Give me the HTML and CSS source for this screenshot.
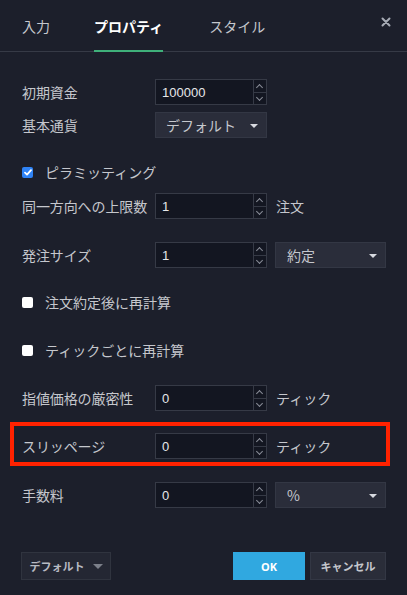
FILE: index.html
```html
<!DOCTYPE html>
<html lang="ja">
<head>
<meta charset="utf-8">
<link rel="stylesheet" href="styles.css">
</head>
<body>
<div class="dialog">
  <div class="tabs">
    <div class="tab">入力</div>
    <div class="tab active">プロパティ</div>
    <div class="tab">スタイル</div>
    <div class="close">
      <svg width="10" height="10" viewBox="0 0 10 10"><path d="M1.5 1.5 L8.5 8.5 M8.5 1.5 L1.5 8.5" stroke="#a7abb5" stroke-width="2" stroke-linecap="round"/></svg>
    </div>
  </div>
  <div class="form">
    <div class="row r1">
      <div class="label">初期資金</div>
      <div class="num"><span class="val">100000</span><span class="spin"><i class="up"></i><i class="dn"></i></span></div>
    </div>
    <div class="row r2">
      <div class="label">基本通貨</div>
      <div class="select wide"><span>デフォルト</span><b class="caret"></b></div>
    </div>
    <div class="row check r3">
      <span class="box on"><svg width="8" height="7" viewBox="0 0 8 7"><path d="M1 3.6 L3 5.6 L7 1.2" stroke="#fff" stroke-width="1.8" fill="none" stroke-linecap="round" stroke-linejoin="round"/></svg></span>
      <span class="ctext">ピラミッティング</span>
    </div>
    <div class="row r4">
      <div class="label">同一方向への上限数</div>
      <div class="num"><span class="val">1</span><span class="spin"><i class="up"></i><i class="dn"></i></span></div>
      <div class="unit">注文</div>
    </div>
    <div class="row r5">
      <div class="label">発注サイズ</div>
      <div class="num"><span class="val">1</span><span class="spin"><i class="up"></i><i class="dn"></i></span></div>
      <div class="select unitsel"><span>約定</span><b class="caret"></b></div>
    </div>
    <div class="row check r6">
      <span class="box"></span>
      <span class="ctext">注文約定後に再計算</span>
    </div>
    <div class="row check r7">
      <span class="box"></span>
      <span class="ctext">ティックごとに再計算</span>
    </div>
    <div class="row r8">
      <div class="label">指値価格の厳密性</div>
      <div class="num"><span class="val">0</span><span class="spin"><i class="up"></i><i class="dn"></i></span></div>
      <div class="unit">ティック</div>
    </div>
    <div class="row r9 highlight">
      <div class="label">スリッページ</div>
      <div class="num"><span class="val">0</span><span class="spin"><i class="up"></i><i class="dn"></i></span></div>
      <div class="unit">ティック</div>
    </div>
    <div class="row r10">
      <div class="label">手数料</div>
      <div class="num"><span class="val">0</span><span class="spin"><i class="up"></i><i class="dn"></i></span></div>
      <div class="select unitsel"><span>%</span><b class="caret"></b></div>
    </div>
  </div>
  <div class="footer">
    <div class="btn deflt">デフォルト <b class="caret grey"></b></div>
    <div class="spacer"></div>
    <div class="btn ok">OK</div>
    <div class="btn cancel">キャンセル</div>
  </div>
</div>
</body>
</html>
```

FILE: styles.css
```css
* { box-sizing: border-box; }
html, body { margin: 0; padding: 0; }
body {
  width: 407px;
  height: 595px;
  background: #1c1f2b;
  font-family: "Noto Sans CJK JP", "Noto Sans", sans-serif;
  color: #c5c7cd;
  font-size: 14px;
  overflow: hidden;
}
.dialog { width: 407px; height: 595px; display: flex; flex-direction: column; }
.tabs {
  height: 52px;
  border-bottom: 1px solid #363a46;
  display: flex;
  align-items: stretch;
  padding-left: 22px;
}
.tab {
  font-size: 14px;
  color: #c5c7cd;
  display: flex;
  align-items: center;
  padding-top: 1px;
  border-bottom: 2px solid transparent;
  margin-bottom: -1px;
}
.tab:first-child { margin-right: 44px; }
.tab.active {
  color: #ffffff;
  font-weight: bold;
  border-bottom-color: #3fb07a;
  margin-right: 46px;
}
.close {
  margin-left: auto;
  width: 40px;
  display: flex;
  align-items: flex-start;
  justify-content: center;
  padding-top: 17px;
  padding-right: 2px;
}
.form { display: flex; flex-direction: column; padding: 0 21px 0 22px; }
.row { display: flex; align-items: center; height: 26px; }
.r1 { margin-top: 27px; }
.r2 { margin-top: 7px; }
.r3 { margin-top: 21px; }
.r4 { margin-top: 8px; }
.r5 { margin-top: 23px; }
.r6 { margin-top: 21px; }
.r7 { margin-top: 22px; }
.r8 { margin-top: 22px; }
.r9 { margin-top: 22px; }
.r10 { margin-top: 23px; }
.label { width: 133px; font-size: 14px; color: #c5c7cd; white-space: nowrap; letter-spacing: -0.1px; }
.num {
  width: 112px;
  height: 26px;
  display: flex;
  background: #131621;
  border: 1px solid #363a46;
}
.val {
  flex: 1;
  padding-left: 6px;
  font-family: "Liberation Sans", "Noto Sans", sans-serif;
  font-size: 13px;
  color: #e6e7ea;
  display: flex;
  align-items: center;
  padding-top: 1px;
}
.spin {
  width: 13px;
  border-left: 1px solid #363a46;
  display: flex;
  flex-direction: column;
}
.spin i { flex: 1; position: relative; display: block; }
.spin i.up { border-bottom: 1px solid #363a46; }
.spin i::after {
  content: "";
  position: absolute;
  left: 3px;
  width: 4px;
  height: 4px;
  border-left: 1px solid #8a8e98;
  border-top: 1px solid #8a8e98;
}
.spin i.up::after { top: 5px; transform: rotate(45deg); }
.spin i.dn::after { top: 2px; transform: rotate(225deg); }
.unit { margin-left: 9px; font-size: 14px; color: #c5c7cd; }
.select {
  height: 26px;
  background: #2a2d3a;
  border: 1px solid #333744;
  display: flex;
  align-items: center;
  padding-left: 10px;
  padding-right: 8px;
  color: #c5c7cd;
  font-size: 14px;
}
.select span { flex: 1; }
.select.wide { width: 112px; }
.select.unitsel { width: 111px; margin-left: 8px; padding-left: 11px; }
.caret {
  width: 0; height: 0;
  border-left: 4px solid transparent;
  border-right: 4px solid transparent;
  border-top: 4px solid #d8dae0;
  margin-top: 2px;
}
.caret.grey { border-top-color: #7c808a; border-left-width: 5px; border-right-width: 5px; border-top-width: 5px; margin-left: 8px; margin-top: 1px; }
.box {
  width: 11px; height: 11px;
  border-radius: 2px;
  background: #ffffff;
  display: flex; align-items: center; justify-content: center;
  margin-right: 12px;
}
.box.on { background: #2f83f6; }
.ctext { font-size: 14px; color: #c5c7cd; }
.highlight { position: relative; }
.highlight::after {
  content: "";
  position: absolute;
  left: -12px; right: -4px; top: -11px; bottom: -7px;
  border: 4px solid #ff2200;
  pointer-events: none;
}
.footer {
  margin-top: 44px;
  display: flex;
  padding: 0 21px 0 21px;
  height: 28px;
}
.btn {
  height: 28px;
  display: flex; align-items: center; justify-content: center;
  font-size: 11px;
  font-weight: bold;
}
.deflt {
  width: 90px;
  background: #242733;
  border: 1px solid #30343f;
  color: #b8bbc3;
}
.spacer { flex: 1; }
.ok { width: 72px; background: #30a8e0; color: #ffffff; font-family: "Noto Sans", sans-serif; }
.cancel {
  width: 76px; margin-left: 5px;
  background: #2a2d39;
  border: 1px solid #333744;
  color: #c5c7cd;
}
```
